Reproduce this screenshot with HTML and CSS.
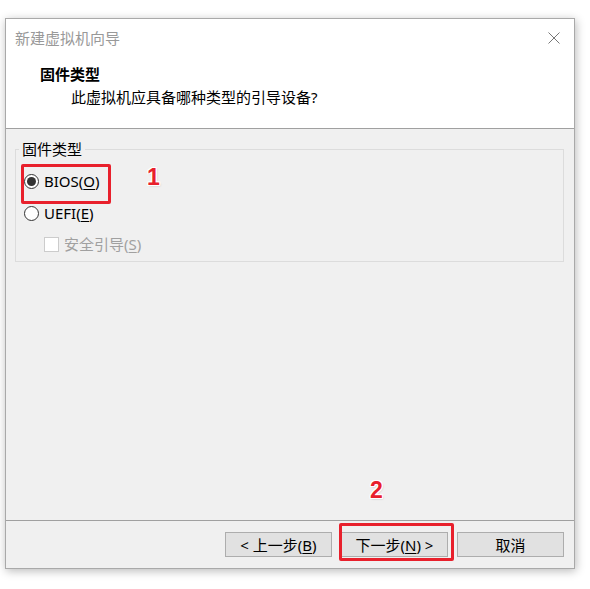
FILE: index.html
```html
<!DOCTYPE html>
<html lang="zh-CN">
<head>
<meta charset="utf-8">
<title>新建虚拟机向导</title>
<link rel="stylesheet" href="styles.css">
</head>
<body>
<div class="window">
  <div class="titlebar">
    <span class="title">新建虚拟机向导</span>
    <svg class="close" width="12" height="12" viewBox="0 0 12 12"><path d="M0.5 0.5L11.5 11.5M11.5 0.5L0.5 11.5" stroke="#777" stroke-width="1" fill="none"/></svg>
  </div>
  <div class="header">
    <div class="heading">固件类型</div>
    <div class="subtitle">此虚拟机应具备哪种类型的引导设备?</div>
  </div>
  <div class="body">
    <fieldset class="group">
      <legend class="legend">固件类型</legend>
      <div class="option">
        <span class="radio checked"></span>
        <span class="label">BIOS(<u>O</u>)</span>
        <span class="mark mark-bios"></span>
        <span class="num num-1">1</span>
      </div>
      <div class="option">
        <span class="radio"></span>
        <span class="label">UEFI(<u>E</u>)</span>
      </div>
      <div class="option sub disabled">
        <span class="check"></span>
        <span class="label">安全引导(<u>S</u>)</span>
      </div>
    </fieldset>
    <span class="num num-2">2</span>
  </div>
  <div class="footer">
    <button class="btn">&lt; 上一步(<u>B</u>)</button>
    <div class="btn-wrap">
      <button class="btn">下一步(<u>N</u>) &gt;</button>
      <span class="mark mark-next"></span>
    </div>
    <button class="btn">取消</button>
  </div>
</div>
</body>
</html>
```

FILE: styles.css
```css
* { box-sizing: border-box; }
html, body { margin: 0; padding: 0; background: #ffffff; }
body {
  font-family: "Noto Sans", "Noto Sans CJK SC", sans-serif;
  font-size: 15px;
  color: #000;
  width: 590px;
  height: 589px;
  overflow: hidden;
}
.window {
  margin: 18px 0 0 5px;
  width: 570px;
  height: 551px;
  border: 1px solid #a9a9a9;
  background: #f0f0f0;
  box-shadow: 1px 2px 9px rgba(0,0,0,0.28);
  display: flex;
  flex-direction: column;
}
.titlebar {
  height: 38px;
  background: #fff;
  display: flex;
  align-items: center;
  justify-content: space-between;
  padding: 0 14px 0 9px;
}
.title { color: #999; line-height: 20px; }
.close { display: block; margin-top: -1px; }
.header {
  height: 72px;
  background: #fff;
  border-bottom: 1px solid #a0a0a0;
  padding-top: 7px;
}
.heading {
  font-weight: bold;
  line-height: 20px;
  padding-left: 34px;
}
.subtitle {
  line-height: 20px;
  margin-top: 3px;
  padding-left: 65px;
}
.body {
  flex: 1;
  position: relative;
  border-bottom: 1px solid #a0a0a0;
  padding-top: 10px;
}
.group {
  margin: 0 10px 0 9px;
  padding: 6px 0 0 8px;
  border: 1px solid #dcdcdc;
  height: 123px;
  min-width: 0;
}
.legend {
  margin-left: -5px;
  padding: 0 3px;
  line-height: 20px;
}
.option {
  position: relative;
  display: flex;
  align-items: center;
  height: 32px;
}
.option.sub { padding-left: 20px; height: 30px; }
.radio {
  width: 15px;
  height: 15px;
  border: 1px solid #333;
  border-radius: 50%;
  background: #fff;
  display: flex;
  align-items: center;
  justify-content: center;
  flex: none;
}
.radio.checked::after {
  content: "";
  width: 9px;
  height: 9px;
  border-radius: 50%;
  background: #333;
}
.check {
  width: 15px;
  height: 15px;
  border: 1px solid #cccccc;
  background: #fff;
  flex: none;
}
.label { margin-left: 5px; line-height: 20px; white-space: nowrap; }
.sub .label { margin-left: 5px; }
.disabled .label { color: #a0a0a0; }
u { text-underline-offset: 2px; }
.mark {
  position: absolute;
  border: 3px solid #e8202c;
  border-radius: 2px;
}
.mark-bios { left: -3px; top: -1px; width: 90px; height: 40px; }
.num {
  position: absolute;
  font-family: "Liberation Sans", sans-serif;
  font-weight: bold;
  font-size: 23px;
  line-height: 24px;
  color: #e8202c;
  text-shadow: 1px 0 0 #fff, -1px 0 0 #fff, 0 1px 0 #fff, 0 -1px 0 #fff, 1px 1px 0 #fff, -1px -1px 0 #fff, 1px -1px 0 #fff, -1px 1px 0 #fff, 1px 1px 2px rgba(0,0,0,0.25);
}
.num-1 { left: 123px; top: 0px; }
.num-2 { left: 364px; top: 349px; }
.footer {
  height: 47px;
  display: flex;
  justify-content: flex-end;
  align-items: flex-start;
  padding: 11px 10px 0 0;
  gap: 9px;
}
.btn-wrap { position: relative; }
.btn {
  width: 107px;
  height: 25px;
  border: 1px solid #adadad;
  background: #e1e1e1;
  font-family: "Noto Sans", "Noto Sans CJK SC", sans-serif;
  font-size: 15px;
  line-height: 20px;
  color: #000;
  padding: 0;
  display: block;
}
.mark-next { left: -2px; top: -9px; width: 115px; height: 38px; }
```
